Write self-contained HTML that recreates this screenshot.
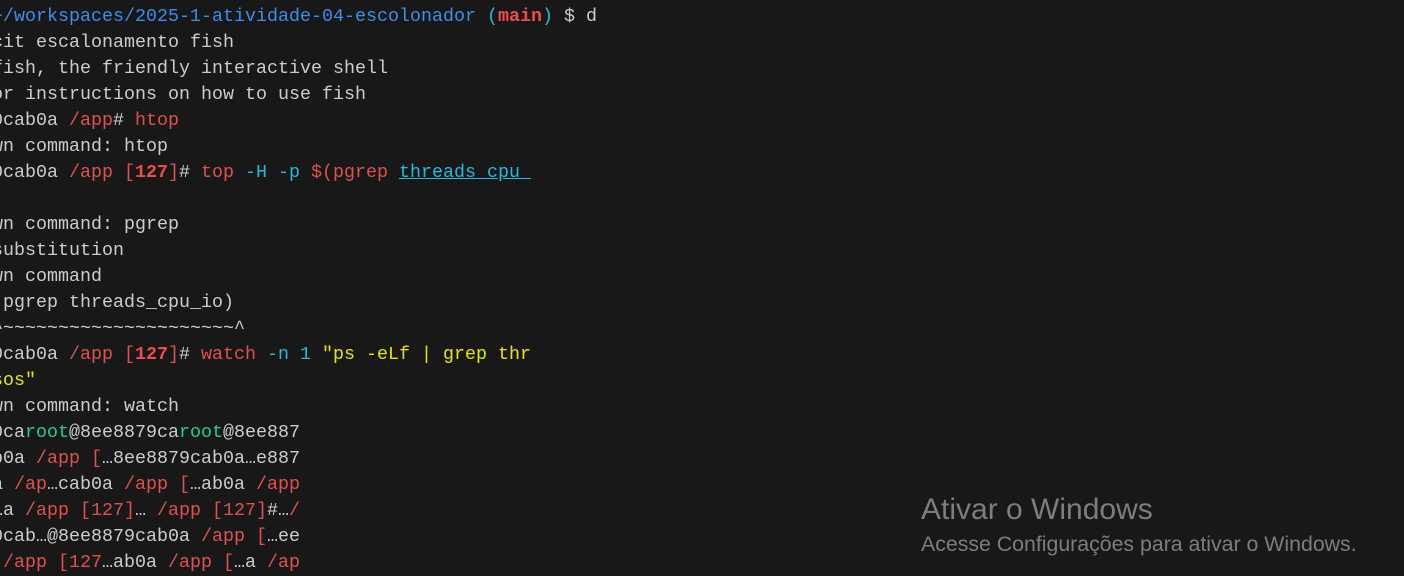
<!DOCTYPE html>
<html><head><meta charset="utf-8"><style>
html,body{margin:0;padding:0;background:#181818;width:1404px;height:568px;overflow:hidden;}
.t{position:absolute;left:-8px;top:4px;font-family:"Liberation Mono",monospace;font-size:18.33px;line-height:26px;color:#cccccc;white-space:pre;}
.r{color:#f14c4c}.rb{color:#f14c4c;font-weight:bold}.dr{color:#e05050}
.b{color:#3b8eea}.c{color:#29b8db}.y{color:#e5e510}.g{color:#23d18b}
.u{color:#29b8db;text-decoration:underline}
.w1{position:absolute;left:921px;top:493px;font-family:"Liberation Sans",sans-serif;font-size:30px;color:#7d7d7d;}
.w2{position:absolute;left:921px;top:532px;font-family:"Liberation Sans",sans-serif;font-size:21.3px;color:#7d7d7d;}
</style></head><body>
<div class="t"><span class="b">~/workspaces/2025-1-atividade-04-escolonador</span> <span class="c">(</span><span class="rb">main</span><span class="c">)</span> $ d
cit escalonamento fish
fish, the friendly interactive shell
or instructions on how to use fish
0cab0a <span class="dr">/app</span># <span class="dr">htop</span>
wn command: htop
0cab0a <span class="dr">/app</span> <span class="dr">[</span><span class="rb">127</span><span class="dr">]</span># <span class="dr">top</span> <span class="c">-H -p</span> <span class="dr">$(pgrep</span> <span class="u">threads_cpu_</span>

wn command: pgrep
substitution
wn command
(pgrep threads_cpu_io)
^~~~~~~~~~~~~~~~~~~~~~^
0cab0a <span class="dr">/app</span> <span class="dr">[</span><span class="rb">127</span><span class="dr">]</span># <span class="dr">watch</span> <span class="c">-n 1</span> <span class="y">"ps -eLf | grep thr</span>
<span class="y">sos"</span>
wn command: watch
0ca<span class="g">root</span>@8ee8879ca<span class="g">root</span>@8ee887
b0a <span class="dr">/app [</span>…8ee8879cab0a…e887
a <span class="dr">/ap</span>…cab0a <span class="dr">/app [</span>…ab0a <span class="dr">/app</span>
…a <span class="dr">/app [127]</span>… <span class="dr">/app [127]</span>#…<span class="dr">/</span>
0cab…@8ee8879cab0a <span class="dr">/app [</span>…ee
 <span class="dr">/app [127</span>…ab0a <span class="dr">/app [</span>…a <span class="dr">/ap</span></div>
<div class="w1">Ativar o Windows</div>
<div class="w2">Acesse Configurações para ativar o Windows.</div>
</body></html>
